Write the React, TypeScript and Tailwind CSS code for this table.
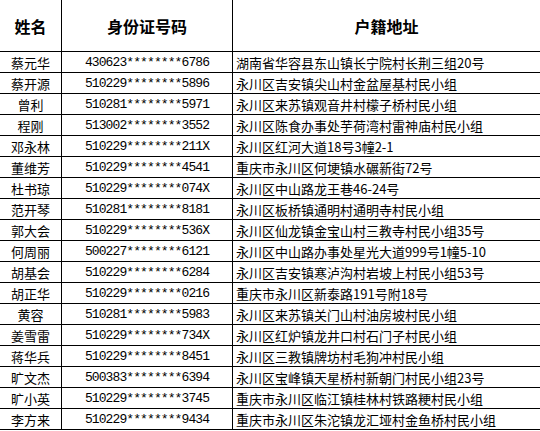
import React from "react";

const rows: [string, string, string][] = [
  ["蔡元华", "430623********6786", "湖南省华容县东山镇长宁院村长荆三组20号"],
  ["蔡开源", "510229********5896", "永川区吉安镇尖山村金盆屋基村民小组"],
  ["曾利", "510281********5971", "永川区来苏镇观音井村檬子桥村民小组"],
  ["程刚", "513002********3552", "永川区陈食办事处芋荷湾村雷神庙村民小组"],
  ["邓永林", "510229********211X", "永川区红河大道18号3幢2-1"],
  ["董维芳", "510229********4541", "重庆市永川区何埂镇水碾新街72号"],
  ["杜书琼", "510229********074X", "永川区中山路龙王巷46-24号"],
  ["范开琴", "510281********8181", "永川区板桥镇通明村通明寺村民小组"],
  ["郭大会", "510229********536X", "永川区仙龙镇金宝山村三教寺村民小组35号"],
  ["何周丽", "500227********6121", "永川区中山路办事处星光大道999号1幢5-10"],
  ["胡基会", "510229********6284", "永川区吉安镇寒泸沟村岩坡上村民小组53号"],
  ["胡正华", "510229********0216", "重庆市永川区新泰路191号附18号"],
  ["黄容", "510281********5983", "永川区来苏镇关门山村油房坡村民小组"],
  ["姜雪雷", "510229********734X", "永川区红炉镇龙井口村石门子村民小组"],
  ["蒋华兵", "510229********8451", "永川区三教镇牌坊村毛狗冲村民小组"],
  ["旷文杰", "500383********6394", "永川区宝峰镇天星桥村新朝门村民小组23号"],
  ["旷小英", "510229********3745", "重庆市永川区临江镇桂林村铁路粳村民小组"],
  ["李方来", "510229********9434", "重庆市永川区朱沱镇龙汇垭村金鱼桥村民小组"],
];

const cjk = { fontFamily: '"Noto Sans CJK SC", sans-serif' };
const mono = { fontFamily: '"Liberation Mono", "Noto Sans CJK SC", monospace' };

export default function App() {
  return (
    <div className="w-[540px] h-[431px] overflow-hidden bg-white text-black" style={cjk}>
      <div className="flex h-[52px] border-b border-black">
        <div className="w-[62px] shrink-0 border-r border-black flex items-center justify-center text-[16px] font-bold">
          姓名
        </div>
        <div className="w-[171px] shrink-0 border-r border-black flex items-center justify-center text-[16px] font-bold">
          身份证号码
        </div>
        <div className="flex-1 flex items-center justify-center text-[16px] font-bold">
          户籍地址
        </div>
      </div>
      {rows.map(([name, id, addr]) => (
        <div key={name} className="flex h-[21px] border-b border-black">
          <div className="w-[62px] shrink-0 border-r border-black flex items-center justify-center text-[13px] leading-none">
            {name}
          </div>
          <div
            className="w-[171px] shrink-0 border-r border-black flex items-center justify-center text-[13px] tracking-[-0.9px] leading-none"
            style={mono}
          >
            {id}
          </div>
          <div className="flex-1 flex items-center pl-[3px] text-[13px] leading-none whitespace-nowrap overflow-hidden">
            {addr}
          </div>
        </div>
      ))}
    </div>
  );
}
